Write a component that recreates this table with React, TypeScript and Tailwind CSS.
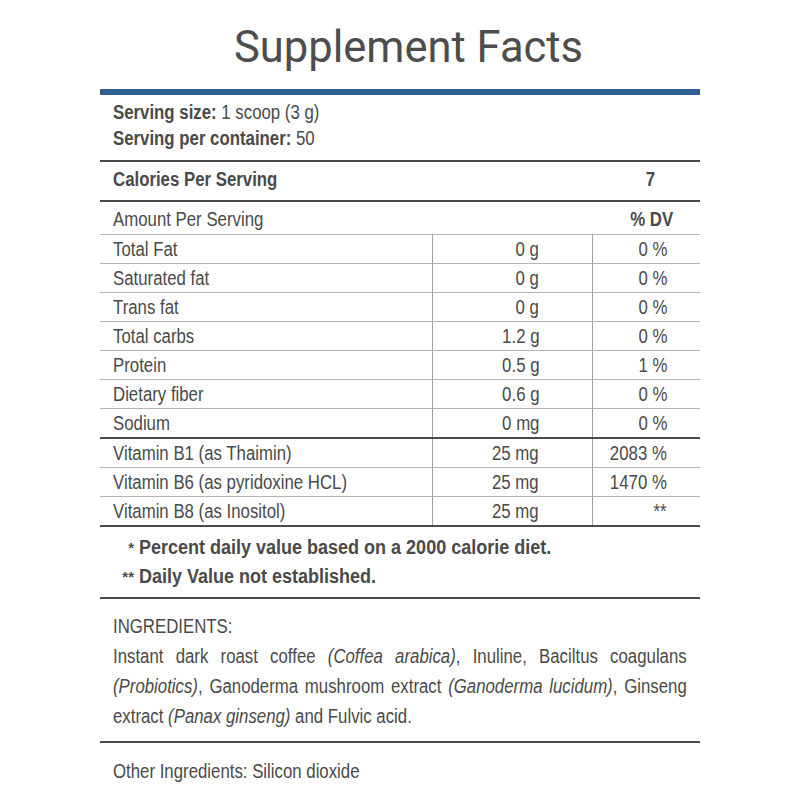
import React from 'react';

// No narrow face is installed, so Liberation Sans is squeezed horizontally to read like Arial Narrow
const sans = "font-['Liberation_Sans',Arial,sans-serif]";

type Row = { name: string; amount: string; dv: string };

const nutrients: Row[] = [
  { name: 'Total Fat', amount: '0 g', dv: '0 %' },
  { name: 'Saturated fat', amount: '0 g', dv: '0 %' },
  { name: 'Trans fat', amount: '0 g', dv: '0 %' },
  { name: 'Total carbs', amount: '1.2 g', dv: '0 %' },
  { name: 'Protein', amount: '0.5 g', dv: '1 %' },
  { name: 'Dietary fiber', amount: '0.6 g', dv: '0 %' },
  { name: 'Sodium', amount: '0 mg', dv: '0 %' },
];

const vitamins: Row[] = [
  { name: 'Vitamin B1 (as Thaimin)', amount: '25 mg', dv: '2083 %' },
  { name: 'Vitamin B6 (as pyridoxine HCL)', amount: '25 mg', dv: '1470 %' },
  { name: 'Vitamin B8 (as Inositol)', amount: '25 mg', dv: '**' },
];

function L({ children }: { children: React.ReactNode }) {
  return <span className="inline-block whitespace-nowrap scale-x-[0.84] origin-left">{children}</span>;
}

function R({ children }: { children: React.ReactNode }) {
  return <span className="inline-block whitespace-nowrap scale-x-[0.84] origin-right">{children}</span>;
}

function FactRow({ row, last }: { row: Row; last?: boolean }) {
  return (
    <div
      className={`grid grid-cols-[333px_160px_107px] leading-[28px] ${
        last ? 'h-[30px] border-b-2 border-[#4a4a4a]' : 'h-[29px] border-b border-[#b5b5b5]'
      }`}
    >
      <div className="pl-[13px] border-r border-[#a0a0a0]">
        <L>{row.name}</L>
      </div>
      <div className="pr-[53px] text-right border-r border-[#a0a0a0]">
        <R>{row.amount}</R>
      </div>
      <div className="pr-[33px] text-right">
        <R>{row.dv}</R>
      </div>
    </div>
  );
}

export default function App() {
  return (
    <div className="min-h-[800px] bg-white overflow-hidden">
      <div className={`w-[600px] mx-auto text-[#4a4a4a] text-[20px] ${sans}`}>
        {/* Title */}
        <h1 className="pt-[23px] pl-[17px] h-[89px] text-center text-[43.5px] leading-[50px] text-[#4d4d4d] font-['Roboto',sans-serif]">
          Supplement Facts
        </h1>
        <div className="h-[6px] bg-[#2f5f8f]" />

        {/* Serving */}
        <div className="px-[13px] pt-[4px] pb-[9px] leading-[26px] border-b-2 border-[#4a4a4a]">
          <p>
            <L>
              <span className="font-bold">Serving size:</span> 1 scoop (3 g)
            </L>
          </p>
          <p>
            <L>
              <span className="font-bold">Serving per container:</span> 50
            </L>
          </p>
        </div>

        {/* Calories */}
        <div className="flex justify-between pl-[13px] pr-[45px] pt-[4px] pb-[8px] leading-[26px] font-bold border-b-2 border-[#4a4a4a]">
          <L>Calories Per Serving</L>
          <R>7</R>
        </div>

        {/* Header */}
        <div className="flex justify-between pl-[13px] pr-[27px] h-[33px] pt-[3px] leading-[29px] border-b border-[#b5b5b5]">
          <L>Amount Per Serving</L>
          <R>
            <span className="font-bold">% DV</span>
          </R>
        </div>

        {nutrients.map((r, i) => (
          <FactRow key={r.name} row={r} last={i === nutrients.length - 1} />
        ))}
        {vitamins.map((r, i) => (
          <FactRow key={r.name} row={r} last={i === vitamins.length - 1} />
        ))}

        {/* Footnotes */}
        <div className="px-[13px] pt-[6px] pb-[6px] leading-[29px] font-bold border-b-2 border-[#4a4a4a]">
          <p className="flex">
            <span className="w-[21px] mr-[5px] text-right text-[15px]">*</span>
            <span className="inline-block whitespace-nowrap scale-x-[0.9] origin-left">
              Percent daily value based on a 2000 calorie diet.
            </span>
          </p>
          <p className="flex">
            <span className="w-[21px] mr-[5px] text-right text-[15px]">**</span>
            <span className="inline-block whitespace-nowrap scale-x-[0.9] origin-left">
              Daily Value not established.
            </span>
          </p>
        </div>

        {/* Ingredients */}
        <div className="px-[13px] pt-[12px] pb-[10px] leading-[30px] border-b-2 border-[#4a4a4a]">
          <p>
            <L>INGREDIENTS:</L>
          </p>
          <div className="w-[683px] scale-x-[0.84] origin-left">
            <p className="text-justify [text-align-last:justify]">
              Instant dark roast coffee <i>(Coffea arabica)</i>, Inuline, Baciltus coagulans
            </p>
            <p className="text-justify [text-align-last:justify]">
              <i>(Probiotics)</i>, Ganoderma mushroom extract <i>(Ganoderma lucidum)</i>, Ginseng
            </p>
            <p>
              extract <i>(Panax ginseng)</i> and Fulvic acid.
            </p>
          </div>
        </div>

        <div className="px-[13px] pt-[13px] leading-[30px]">
          <L>Other Ingredients: Silicon dioxide</L>
        </div>
      </div>
    </div>
  );
}
